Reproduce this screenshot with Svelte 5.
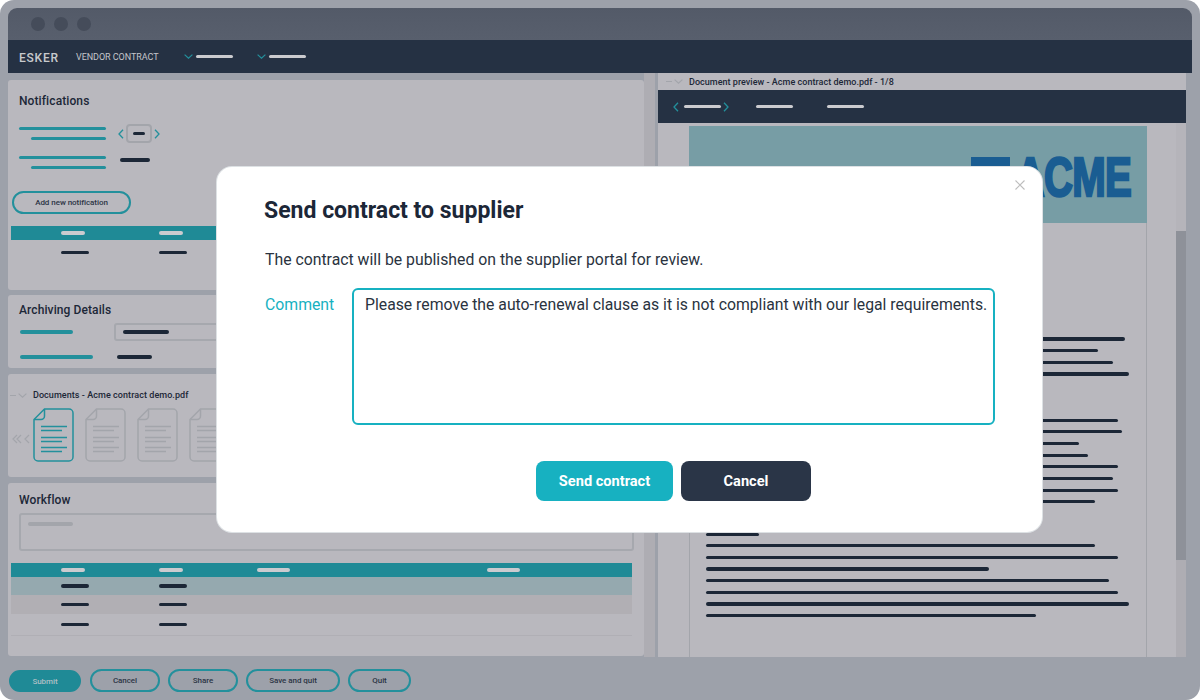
<script>
  const group1 = [419, 392, 407, 423];
  const group2 = [412, 416, 373, 382, 412, 407, 412, 389];
  const group3 = [53, 389, 412, 283, 403, 412, 423, 330];
  const workflowRows = ['selected', 'alt', 'plain'];
  const footerButtons = [
    { label: 'Cancel', width: 70 },
    { label: 'Share', width: 70 },
    { label: 'Save and quit', width: 94 },
    { label: 'Quit', width: 63 }
  ];
  const thumbs = [true, false, false, false];
</script>

{#snippet chevronDown(color)}
  <svg class="chev-down" viewBox="0 0 9 5" aria-hidden="true"><path d="M.6.6 4.5 4.2 8.4.6" fill="none" stroke={color} stroke-width="1.200"/></svg>
{/snippet}

{#snippet chevronH(dir, color)}
  <svg class="chev-h" viewBox="0 0 6 10" aria-hidden="true"><path d={dir === 'l' ? 'M5 .8 1 5l4 4.2' : 'M1 .8 5 5 1 9.2'} fill="none" stroke={color} stroke-width="1.300"/></svg>
{/snippet}

{#snippet docIcon(active)}
  <svg class="doc-icon" viewBox="0 0 41 54" aria-hidden="true">
    <g fill="none" stroke={active ? '#23909c' : '#a3a5ab'}>
      <path stroke-width="1.500" d="M11.500 1H36a4 4 0 0 1 4 4v44a4 4 0 0 1-4 4H5a4 4 0 0 1-4-4V11.500Z"/>
      <path stroke-width="1.500" d="M11.500 1V8a3.500 3.500 0 0 1-3.500 3.500H1"/>
      <path stroke-width="1.300" d="M8 18.500h26M8 22.500h21M8 29.500h26M8 33.500h21M8 39.500h26M8 43.500h21"/>
    </g>
  </svg>
{/snippet}

<div class="screen">
  <div class="frame">
    <div class="titlebar">
      <span class="dot"></span><span class="dot"></span><span class="dot"></span>
    </div>
    <nav class="topnav">
      <span class="logo">ESKER</span>
      <span class="product">VENDOR CONTRACT</span>
      <span class="menu">{@render chevronDown('#23909c')}<span class="bar light w37"></span></span>
      <span class="menu">{@render chevronDown('#23909c')}<span class="bar light w37"></span></span>
    </nav>

    <div class="body">
      <div class="left">
        <section class="panel notifications">
          <h2>Notifications</h2>
          <div class="notif-row stepper-row">
            <div class="label-bars"><span class="bar teal w87"></span><span class="bar teal w75"></span></div>
            <div class="stepper">
              {@render chevronH('l', '#23909c')}
              <span class="step-box"><span class="bar ink w12"></span></span>
              {@render chevronH('r', '#23909c')}
            </div>
          </div>
          <div class="notif-row">
            <div class="label-bars"><span class="bar teal w87"></span><span class="bar teal w75"></span></div>
            <span class="bar ink w30 notif-value"></span>
          </div>
          <button class="pill add">Add new notification</button>
          <div class="thead short">
            <span class="bar light w24"></span><span class="bar light w24"></span>
          </div>
          <div class="tcell-row">
            <span class="bar ink w28"></span><span class="bar ink w28"></span>
          </div>
        </section>

        <section class="panel archiving">
          <h2>Archiving Details</h2>
          <div class="arch-row">
            <span class="bar teal w53"></span>
            <span class="field"><span class="bar ink w46"></span></span>
          </div>
          <div class="arch-row second">
            <span class="bar teal w73"></span>
            <span class="bar ink w35"></span>
          </div>
        </section>

        <section class="panel documents">
          <div class="sect-head">
            <span class="dash"></span>{@render chevronDown('#a3a5ab')}
            <span class="sect-title">Documents - Acme contract demo.pdf</span>
          </div>
          <div class="thumbs">
            <span class="thumb-nav">
              <svg viewBox="0 0 18 10" aria-hidden="true"><path d="M5 1 1 5l4 4M9 1 5 5l4 4M17 1l-4 4 4 4" fill="none" stroke="#a3a5ab" stroke-width="1.200"/></svg>
            </span>
            {#each thumbs as active}
              {@render docIcon(active)}
            {/each}
          </div>
        </section>

        <section class="panel workflow">
          <h2>Workflow</h2>
          <div class="wf-input"><span class="bar muted w45"></span></div>
          <div class="thead full">
            <span class="bar light w24"></span><span class="bar light w24"></span>
            <span class="bar light w33"></span><span class="bar light w33"></span>
          </div>
          {#each workflowRows as row}
            <div class="wf-row {row}">
              <span class="bar ink w28"></span><span class="bar ink w28"></span>
            </div>
          {/each}
        </section>
      </div>

      <div class="splitter"></div>
      <div class="split-gap"></div>

      <div class="right">
        <div class="preview-head">
          <span class="dash"></span>{@render chevronDown('#a3a5ab')}
          <span class="sect-title">Document preview - Acme contract demo.pdf - 1/8</span>
        </div>
        <div class="preview-bar">
          {@render chevronH('l', '#23909c')}
          <span class="bar light w37 tab-a"></span>
          {@render chevronH('r', '#23909c')}
          <span class="bar light w37 tab-b"></span>
          <span class="bar light w37 tab-c"></span>
        </div>
        <div class="doc-area">
          <div class="page">
            <div class="letterhead">
              <span class="acme-mark"></span>
              <span class="acme">ACME</span>
            </div>
            <div class="doc-lines g1">
              {#each group1 as w}<span class="bar doc" style="width:{w}px"></span>{/each}
            </div>
            <div class="doc-lines g2">
              {#each group2 as w}<span class="bar doc" style="width:{w}px"></span>{/each}
            </div>
            <div class="doc-lines g3">
              {#each group3 as w}<span class="bar doc" style="width:{w}px"></span>{/each}
            </div>
          </div>
          <div class="scroll"><span class="scroll-top"></span><span class="scroll-thumb"></span><span class="scroll-rest"></span></div>
        </div>
      </div>
    </div>

    <footer class="actions">
      <button class="pill primary">Submit</button>
      {#each footerButtons as b}
        <button class="pill foot" style="width:{b.width}px">{b.label}</button>
      {/each}
    </footer>
  </div>

  <div class="modal" role="dialog" aria-label="Send contract to supplier">
    <button class="close" aria-label="Close">
      <svg viewBox="0 0 10 10" aria-hidden="true"><path d="M.5.5l9 9M9.500.5l-9 9" fill="none" stroke="#bdbdbd" stroke-width="1.100"/></svg>
    </button>
    <h1>Send contract to supplier</h1>
    <p>The contract will be published on the supplier portal for review.</p>
    <div class="comment">
      <span class="comment-label">Comment</span>
      <div class="comment-box">Please remove the auto-renewal clause as it is not compliant with our legal requirements.</div>
    </div>
    <div class="modal-actions">
      <button class="btn send">Send contract</button>
      <button class="btn cancel">Cancel</button>
    </div>
  </div>
</div>

<style>
  :global(body) { margin: 0; background: #fff; }
  .screen { position: relative; width: 1200px; height: 700px; overflow: hidden; font-family: Roboto, "Liberation Sans", sans-serif; color: #1c2737; }
  .frame { height: 700px; box-sizing: border-box; padding: 8px 8px 0; background: #9da1aa; border-radius: 14px; display: flex; flex-direction: column; }

  .titlebar { height: 32px; flex: none; display: flex; align-items: center; gap: 9px; padding-left: 23px; background: linear-gradient(#535a68, #585f6d); border-radius: 9px 9px 0 0; }
  .dot { width: 14px; height: 14px; border-radius: 50%; background: #454c5a; }

  .topnav { height: 33px; flex: none; display: flex; align-items: center; background: #253143; color: #c4c6ca; padding-left: 11px; }
  .logo { width: 57px; font-size: 12px; font-weight: 500; letter-spacing: .75px; color: #c8cacd; padding-top: 2px; }
  .product { width: 108px; font-size: 9px; letter-spacing: -.05px; font-weight: 400; }
  .menu { display: flex; align-items: center; gap: 3px; width: 73px; }

  .bar { display: block; height: 3.500px; border-radius: 2px; flex: none; }
  .teal { background: #23909c; }
  .ink { background: #1c2737; }
  .light { background: #cbcbcf; }
  .muted { background: #a3a5ab; }
  .w12 { width: 12px; } .w24 { width: 24px; } .w28 { width: 28px; } .w30 { width: 30px; } .w33 { width: 33px; }
  .w35 { width: 35px; } .w37 { width: 37px; } .w45 { width: 45px; } .w46 { width: 46px; } .w53 { width: 53px; }
  .w73 { width: 73px; } .w75 { width: 75px; } .w87 { width: 87px; }

  .chev-down { width: 9px; height: 5px; flex: none; display: block; }
  .chev-h { width: 6px; height: 10px; flex: none; display: block; }

  .body { flex: none; height: 584px; display: flex; }
  .left { width: 636px; flex: none; display: flex; flex-direction: column; padding-top: 7px; box-sizing: border-box; }
  .splitter { width: 11px; flex: none; background: #aeadb3; }
  .split-gap { width: 3px; flex: none; }

  .panel { background: #b9b8be; border-radius: 3px; box-sizing: border-box; padding: 0 11px; }
  h2 { margin: 0; font-size: 12px; line-height: 14px; font-weight: 500; letter-spacing: .1px; color: #1c2737; }

  .notifications { height: 210px; padding: 14px 3px 0; }
  .notifications h2 { margin-left: 8px; }
  .notif-row { display: flex; align-items: center; margin-left: 8px; }
  .stepper-row { margin-top: 19px; height: 13px; }
  .notif-row:not(.stepper-row) { margin-top: 16px; height: 13px; }
  .label-bars { width: 87px; display: flex; flex-direction: column; align-items: flex-end; gap: 6.500px; }
  .stepper { display: flex; align-items: center; gap: 1px; margin-left: 12px; }
  .step-box { width: 26px; height: 19px; margin: 0 1px; box-sizing: border-box; border: 2px solid #a3a5ab; border-radius: 4px; display: flex; align-items: center; justify-content: center; }
  .notif-value { margin-left: 14px; margin-top: -5px; }

  .pill { font-family: inherit; font-size: 8px; font-weight: 500; color: #2c3545; box-sizing: border-box; border: 2px solid #23909c; border-radius: 12px; background: transparent; padding: 0; letter-spacing: -.05px; flex: none; }
  .add { display: block; width: 119px; height: 23px; margin: 22px 0 0 1px; }

  .thead { height: 14px; background: #1f8a96; display: grid; align-items: center; padding-left: 50px; box-sizing: border-box; width: 621px; }
  .thead.short { grid-template-columns: 98px 98px; margin-top: 12px; }
  .thead.full { grid-template-columns: 98px 98px 230px 98px; margin: 12px 0 0 -8px; }
  .tcell-row { display: grid; grid-template-columns: 98px 98px; padding-left: 50px; margin-top: 10.500px; }

  .archiving { height: 73px; margin-top: 5px; padding-top: 8px; }
  .arch-row { display: flex; align-items: center; margin-top: 6px; height: 18px; padding-left: 1px; }
  .field { margin-left: 41px; width: 520px; height: 18px; box-sizing: border-box; border: 2px solid #a6a8ae; border-radius: 3px; display: flex; align-items: center; padding-left: 7px; }
  .arch-row.second { margin-top: 7px; }
  .arch-row.second .ink { margin-left: 24px; }

  .documents { height: 103px; margin-top: 6px; padding: 15px 0 0 2px; }
  .sect-head { display: flex; align-items: center; height: 12px; }
  .dash { width: 6px; height: 1px; background: #a3a5ab; flex: none; margin-right: 2px; }
  .sect-title { font-size: 9px; font-weight: 500; letter-spacing: .06px; color: #1c2737; margin-left: 6px; white-space: nowrap; }
  .thumbs { display: flex; align-items: center; margin-top: 7px; margin-left: 2px; gap: 11px; overflow: hidden; }
  .thumb-nav { width: 18px; margin-right: -8px; display: block; padding-top: 7px; flex: none; }
  .thumb-nav svg { display: block; width: 18px; height: 10px; }
  .doc-icon { width: 41px; height: 54px; flex: none; }

  .workflow { height: 173px; margin-top: 6px; padding-top: 10px; }
  .wf-input { height: 38px; margin-top: 6px; box-sizing: border-box; border: 2px solid #a6a8ae; border-radius: 3px; padding: 7px 7px; margin-right: -1px; }
  .wf-row { display: grid; grid-template-columns: 98px 98px; align-items: center; padding-left: 50px; margin-left: -8px; width: 621px; box-sizing: border-box; }
  .wf-row.selected { height: 18px; background: #95a9af; }
  .wf-row.alt { height: 19px; background: #b1afb4; }
  .wf-row.plain { height: 22px; border-bottom: 1px solid #b0afb5; }

  .right { width: 528px; flex: none; display: flex; flex-direction: column; background: #b9b8be; }
  .preview-head { height: 17px; flex: none; display: flex; align-items: center; padding-left: 8px; }
  .preview-head .sect-title { letter-spacing: .03px; }
  .preview-bar { height: 33px; flex: none; background: #253143; display: flex; align-items: center; padding-left: 15px; }
  .tab-a { margin: 0 2px 0 5px; }
  .tab-b { margin-left: 27px; }
  .tab-c { margin-left: 34px; }
  .doc-area { flex: 1; min-height: 0; display: flex; justify-content: space-between; padding-left: 31px; }
  .page { width: 458px; box-sizing: border-box; margin-top: 3px; border-left: 1px solid #a3a5ab; border-right: 1px solid #a3a5ab; }
  .letterhead { height: 97px; margin: 0 -1px; background: #779da5; position: relative; display: flex; justify-content: flex-end; padding-right: 16px; box-sizing: border-box; }
  .acme-mark { position: absolute; left: 282px; top: 31px; width: 39px; height: 40px; background: #1a5d92; }
  .acme { font-family: "Liberation Sans", sans-serif; font-weight: 700; font-size: 55px; line-height: 40px; margin-top: 31px; color: #1a5d92; letter-spacing: -1px; -webkit-text-stroke: 2.500px #1a5d92; transform: scaleX(.73); transform-origin: right center; }
  .doc-lines { display: flex; flex-direction: column; gap: 8.470px; padding-left: 16px; }
  .doc { background: #1c2737; height: 3.200px; }
  .g1 { margin-top: 114.400px; }
  .g2 { margin-top: 43.100px; }
  .g3 { margin-top: 29.100px; }

  .scroll { width: 10px; display: flex; flex-direction: column; }
  .scroll-top { height: 108px; background: #b5b4ba; flex: none; }
  .scroll-thumb { height: 329px; background: #8e9199; flex: none; }
  .scroll-rest { flex: 1; background: #aeadb3; }

  .actions { flex: 1; display: flex; gap: 8px; padding: 13px 0 0 1px; }
  .pill.primary { width: 72px; height: 22px; margin-right: 1px; background: #1f8a96; color: #aebfc5; border-color: #1f8a96; }
  .pill.foot { height: 23px; margin-top: -1px; }

  .modal { position: absolute; left: 217px; top: 167px; width: 825px; height: 365px; box-sizing: border-box; background: #fff; border-radius: 15px; box-shadow: 0 0 0 1px #dde1e4; padding: 30px 47px 0; }
  .close { position: absolute; right: 17px; top: 13px; width: 10px; height: 10px; padding: 0; border: 0; background: none; }
  .close svg { display: block; width: 10px; height: 10px; }
  h1 { margin: 0; font-size: 23px; line-height: 28px; font-weight: 700; color: #1c2737; }
  p { margin: 25px 0 0 1px; font-size: 15.800px; line-height: 19px; color: #2a3340; }
  .comment { display: flex; align-items: flex-start; margin: 19px 0 0 1px; }
  .comment-label { width: 87px; flex: none; font-size: 15.800px; line-height: 19px; padding-top: 7px; color: #17b1c1; }
  .comment-box { width: 643px; height: 137px; flex: none; box-sizing: border-box; border: 2px solid #17b1c1; border-radius: 6px; padding: 5px 0 0 11px; font-size: 15.770px; line-height: 19px; color: #2a3340; white-space: nowrap; }
  .modal-actions { display: flex; gap: 8px; margin: 36px 0 0 272px; }
  .btn { height: 40px; border: 0; border-radius: 8px; color: #fff; font-family: inherit; font-size: 14.600px; font-weight: 700; padding: 0; }
  .send { width: 137px; background: #17b1c1; }
  .cancel { width: 130px; background: #2a3547; }
</style>
